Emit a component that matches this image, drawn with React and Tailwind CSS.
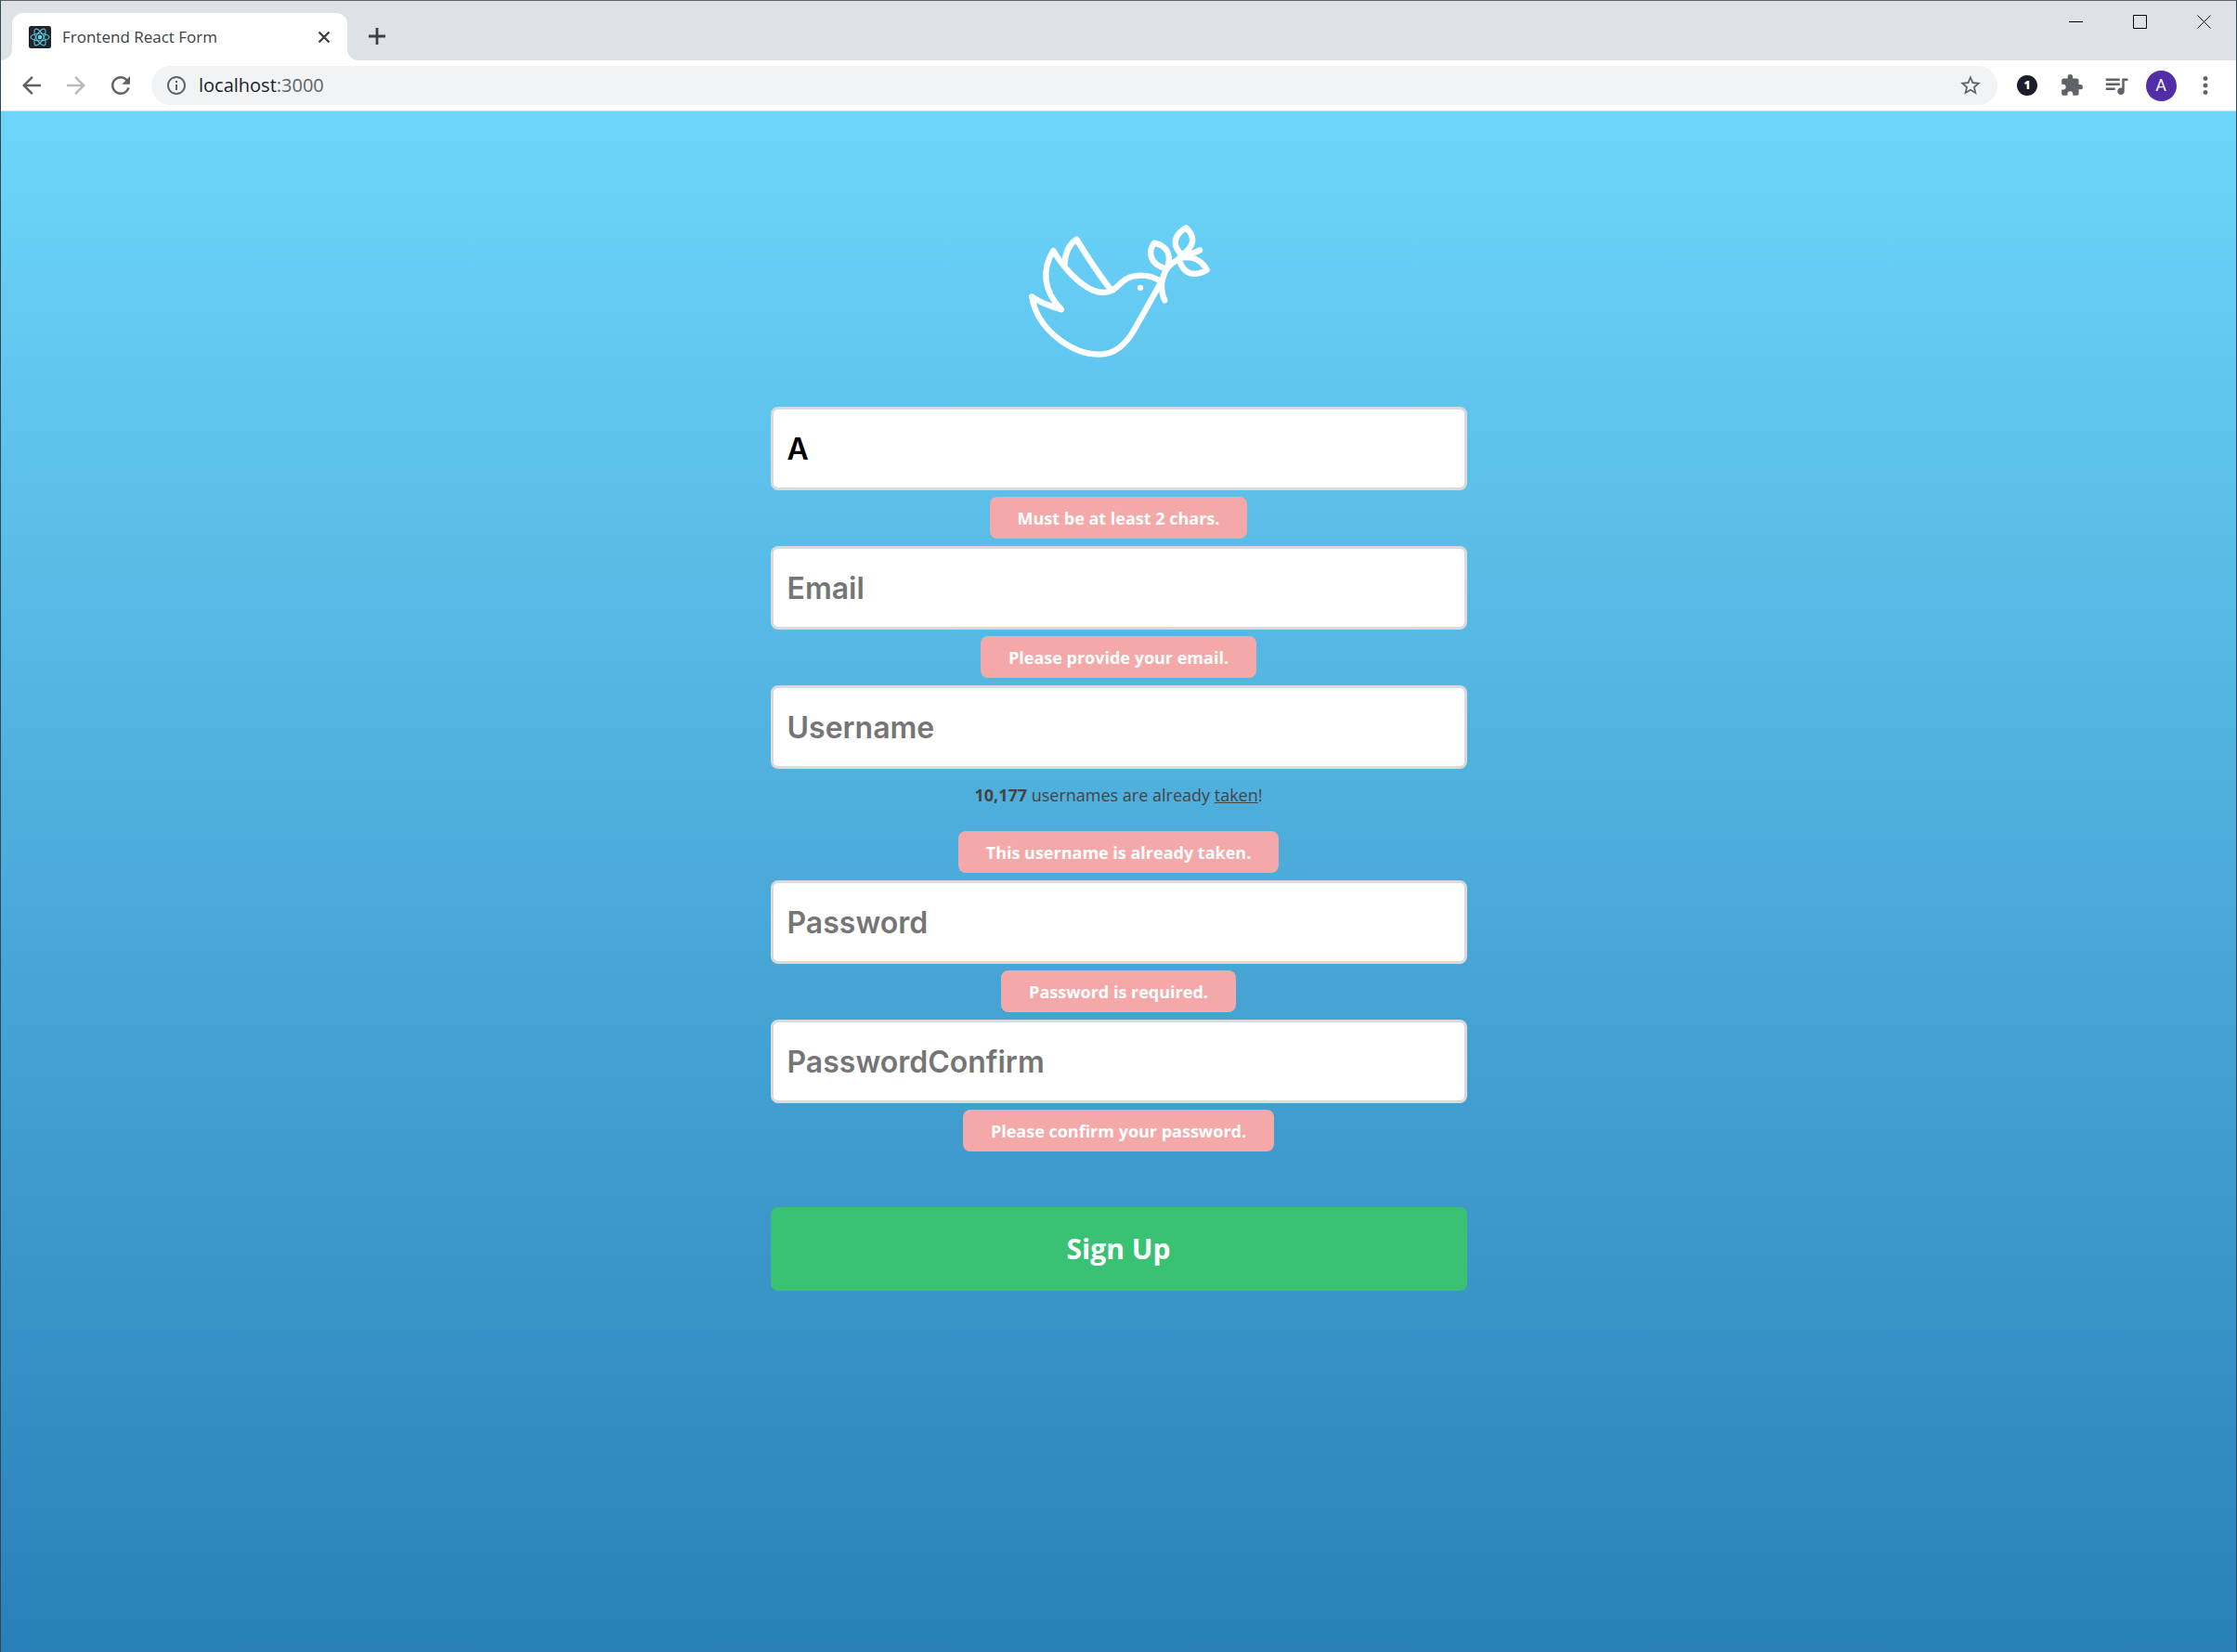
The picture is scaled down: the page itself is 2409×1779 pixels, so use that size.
import { MdArrowBack, MdArrowForward, MdRefresh, MdInfoOutline, MdStarBorder, MdExtension, MdQueueMusic, MdMoreVert } from "react-icons/md";

const fields = [
  { name: "name", label: "Name", type: "text", value: "A", error: "Must be at least 2 chars." },
  { name: "email", label: "Email", type: "email", error: "Please provide your email." },
  { name: "username", label: "Username", type: "text", error: "This username is already taken.", hint: true },
  { name: "password", label: "Password", type: "password", error: "Password is required." },
  { name: "passwordConfirm", label: "PasswordConfirm", type: "password", error: "Please confirm your password." },
];

function ReactMark() {
  return (
    <svg viewBox="0 0 24 24" className="size-6" aria-hidden="true">
      <rect width="24" height="24" rx="2.5" fill="#20232a" />
      <g fill="none" stroke="#58c4dc" strokeWidth="1.1">
        <ellipse cx="12" cy="12" rx="10" ry="4" />
        <ellipse cx="12" cy="12" rx="10" ry="4" transform="rotate(60 12 12)" />
        <ellipse cx="12" cy="12" rx="10" ry="4" transform="rotate(120 12 12)" />
      </g>
      <circle cx="12" cy="12" r="2.2" fill="#61dafb" />
    </svg>
  );
}

function Dove() {
  return (
    <svg viewBox="0 0 690 525" className="h-[175px] w-[230px]" role="img" aria-label="Dove with olive branch">
      <g fill="none" stroke="#fff" strokeWidth="19" strokeLinecap="round" strokeLinejoin="round">
        <path d="M64 284C90 302 125 315 159 325C100 265 95 195 133 135C165 190 235 270 295 270C350 270 340 215 418 215C442 215 462 222 480 234" />
        <path d="M64 284C72 340 105 385 150 420C195 455 240 470 282 470C335 470 370 435 398 384L480 238" />
        <path d="M169 182C170 150 180 117 208 98C240 150 275 207 320 262" />
        <path d="M606 133C570 151 528 158 502 190C482 218 476 262 493 295" />
        <path d="M499 193C440 180 440 135 459 110C500 118 518 150 499 193Z" />
        <path d="M548 148C512 115 526 82 562 61C594 92 588 122 548 148Z" />
        <path d="M541 168C553 208 585 222 629 197C612 166 588 150 541 158Z" />
      </g>
      <circle cx="414" cy="255" r="9.5" fill="#fff" />
    </svg>
  );
}

function TitleBar() {
  return (
    <div className="flex h-16 bg-[#dee1e6]">
      <div className="flex flex-1 items-end">
        <div className="size-3 bg-white">
          <div className="size-3 rounded-br-xl bg-[#dee1e6]" />
        </div>
        <div className="flex h-[51px] w-[361px] items-center rounded-t-xl bg-white pr-[15px] pl-[18px]">
          <ReactMark />
          <span className="ml-3 flex-1 text-[17px] leading-6 text-[#3c4043]">Frontend React Form</span>
          <button aria-label="Close tab" className="flex size-5 items-center justify-center text-[#3c4043]">
            <svg viewBox="0 0 14 14" className="size-3.5" fill="none" stroke="currentColor" strokeWidth="2.4"><path d="M1.5 1.5l11 11M12.5 1.5l-11 11" /></svg>
          </button>
        </div>
        <div className="size-3 bg-white">
          <div className="size-3 rounded-bl-xl bg-[#dee1e6]" />
        </div>
        <button aria-label="New tab" className="mb-4 ml-2.5 flex size-5 items-center justify-center text-[#3c4043]">
          <svg viewBox="0 0 20 20" className="size-5 shrink-0" fill="none" stroke="currentColor" strokeWidth="2.8"><path d="M10 1v18M1 10h18" /></svg>
        </button>
      </div>
      <div className="flex h-11 text-black">
        <button aria-label="Minimize" className="flex w-[69px] items-center justify-center">
          <svg viewBox="0 0 15 15" className="size-[15px]"><path d="M0 7.5h15" stroke="currentColor" /></svg>
        </button>
        <button aria-label="Maximize" className="flex w-[69px] items-center justify-center">
          <svg viewBox="0 0 15 15" className="size-[15px]" fill="none"><path d="M.5.5h14v14H.5z" stroke="currentColor" /></svg>
        </button>
        <button aria-label="Close" className="flex w-[69px] items-center justify-center">
          <svg viewBox="0 0 15 15" className="size-[15px]" fill="none"><path d="M.5.5l14 14M14.5.5l-14 14" stroke="currentColor" /></svg>
        </button>
      </div>
    </div>
  );
}

function Toolbar() {
  return (
    <div className="flex h-[55px] items-center border-b border-[#d8dadd] bg-white text-[#5f6368]">
      <div className="flex items-center pl-[9px]">
        <button aria-label="Back" className="flex w-12 justify-center"><MdArrowBack className="size-[30px]" /></button>
        <button aria-label="Forward" className="flex w-12 justify-center text-[#bababc]"><MdArrowForward className="size-[30px]" /></button>
        <button aria-label="Reload" className="flex w-12 justify-center"><MdRefresh className="size-[30px]" /></button>
      </div>
      <div className="ml-[9px] flex h-[42px] flex-1 items-center rounded-full bg-[#f1f3f4] pr-4 pl-[15px]">
        <MdInfoOutline className="size-6" />
        <div className="ml-3 flex-1 text-xl"><span className="text-[#202124]">localhost</span>:3000</div>
        <button aria-label="Bookmark"><MdStarBorder className="size-[26px]" /></button>
      </div>
      <div className="flex items-center pr-[9px] pl-2">
        <button aria-label="Password manager" className="flex w-12 justify-center">
          <span className="flex size-[22px] items-center justify-center rounded-full bg-[#1b1d2c] text-xs font-extrabold text-white">1</span>
        </button>
        <button aria-label="Extensions" className="flex w-12 justify-center"><MdExtension className="size-[26px]" /></button>
        <button aria-label="Media controls" className="flex w-12 justify-center"><MdQueueMusic className="size-[30px]" /></button>
        <button aria-label="Profile" className="flex w-12 justify-center">
          <span className="flex size-[33px] items-center justify-center rounded-full bg-[#512da8] font-[Roboto] text-lg text-white">A</span>
        </button>
        <button aria-label="Menu" className="flex w-12 justify-center"><MdMoreVert className="size-[30px]" /></button>
      </div>
    </div>
  );
}

export default function App() {
  return (
    <div className="flex min-h-screen flex-col border-x border-t border-x-[#2d4756] border-t-[#5f6267] font-['Open_Sans',sans-serif]">
      <header>
        <TitleBar />
        <Toolbar />
      </header>
      <main className="flex flex-1 flex-col items-center bg-[linear-gradient(to_bottom,#6dd5fa,#2980b9)] px-6 pt-[105px] pb-12">
        <Dove />
        <form className="mt-[38px] flex w-full max-w-[750px] flex-col" noValidate>
          {fields.map((f) => (
            <div key={f.name} className="mb-2 flex flex-col items-center">
              <input
                id={f.name}
                name={f.name}
                type={f.type}
                defaultValue={f.value}
                placeholder={f.label}
                aria-label={f.label}
                aria-describedby={f.name + "-error"}
                className="h-[90px] w-full rounded-lg border-3 border-[#dadada] bg-white px-[15px] font-[Inter] text-[32px] font-semibold text-black outline-none placeholder:text-[#757575]"
              />
              {f.hint && (
                <p className="mt-3 mb-4 text-lg leading-8 text-[#444]">
                  <strong>10,177</strong> usernames are already <u>taken</u>!
                </p>
              )}
              <p id={f.name + "-error"} role="alert" className="mt-[7px] flex h-[45px] items-center rounded-lg bg-[#f4a9a8] px-[30px] text-lg font-bold text-white">
                {f.error}
              </p>
            </div>
          ))}
          <button type="submit" className="mt-[52px] h-[90px] rounded-lg bg-[#3ac274] text-3xl font-bold text-white">Sign Up</button>
        </form>
      </main>
    </div>
  );
}
